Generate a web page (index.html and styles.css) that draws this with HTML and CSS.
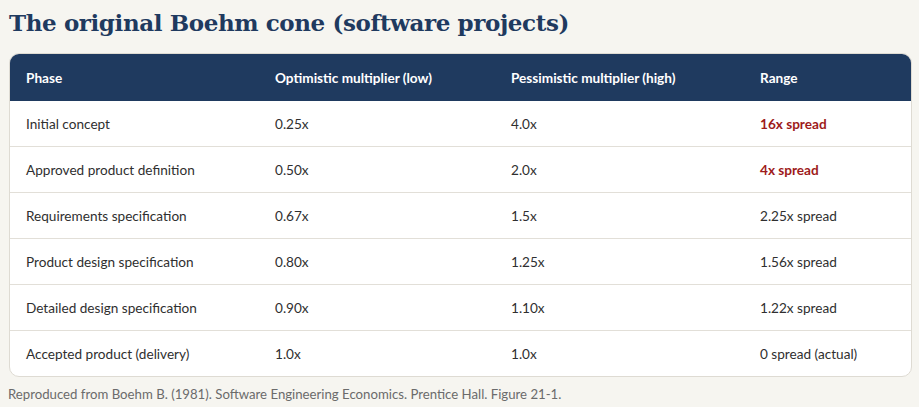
FILE: index.html
```html
<!DOCTYPE html>
<html lang="en">
<head>
<meta charset="utf-8">
<title>Boehm cone</title>
<link rel="stylesheet" href="styles.css">
</head>
<body>
<main class="page">
  <h2 class="title">The original Boehm cone (software projects)</h2>
  <div class="card">
    <table class="cone">
      <thead>
        <tr>
          <th class="c1">Phase</th>
          <th class="c2">Optimistic multiplier (low)</th>
          <th class="c3">Pessimistic multiplier (high)</th>
          <th class="c4">Range</th>
        </tr>
      </thead>
      <tbody>
        <tr><td>Initial concept</td><td>0.25x</td><td>4.0x</td><td class="hot">16x spread</td></tr>
        <tr><td>Approved product definition</td><td>0.50x</td><td>2.0x</td><td class="hot">4x spread</td></tr>
        <tr><td>Requirements specification</td><td>0.67x</td><td>1.5x</td><td>2.25x spread</td></tr>
        <tr><td>Product design specification</td><td>0.80x</td><td>1.25x</td><td>1.56x spread</td></tr>
        <tr><td>Detailed design specification</td><td>0.90x</td><td>1.10x</td><td>1.22x spread</td></tr>
        <tr><td>Accepted product (delivery)</td><td>1.0x</td><td>1.0x</td><td>0 spread (actual)</td></tr>
      </tbody>
    </table>
  </div>
  <p class="source">Reproduced from Boehm B. (1981). Software Engineering Economics. Prentice Hall. Figure 21-1.</p>
</main>
</body>
</html>
```
FILE: styles.css
```css
html, body {
  margin: 0;
  padding: 0;
  background: #f6f5f0;
}
body {
  font-family: "Lato", "Liberation Sans", sans-serif;
  color: #2b2b2b;
}
.page {
  width: 903px;
  padding: 0 0 0 9px;
}
.title {
  margin: 0;
  padding-top: 7px;
  height: 53px;
  box-sizing: border-box;
  font-family: "DejaVu Serif", "Liberation Serif", serif;
  font-weight: bold;
  font-size: 23px;
  line-height: 32px;
  color: #1f3a5f;
  letter-spacing: -0.4px;
}
.card {
  background: #ffffff;
  border: 1px solid #dedbd3;
  border-radius: 10px;
  overflow: hidden;
}
.cone {
  width: 100%;
  border-collapse: collapse;
  table-layout: fixed;
  font-size: 13.6px;
}
.cone th {
  background: #1f3a5f;
  color: #ffffff;
  font-weight: bold;
  text-align: left;
  height: 47px;
  padding: 0 0 0 16px;
}
.cone td {
  height: 45px;
  padding: 0 0 0 16px;
  border-top: 1px solid #e2dfd8;
  color: #2f2f2f;
}
.cone tbody tr:first-child td { border-top: none; }
.c1 { width: 233px; }
.c2 { width: 220px; }
.c3 { width: 233px; }
.cone td.hot {
  color: #9e1b1b;
  font-weight: bold;
}
.source {
  margin: 9px 0 0 -1px;
  font-size: 13.2px;
  color: #6b6b6b;
}
```
